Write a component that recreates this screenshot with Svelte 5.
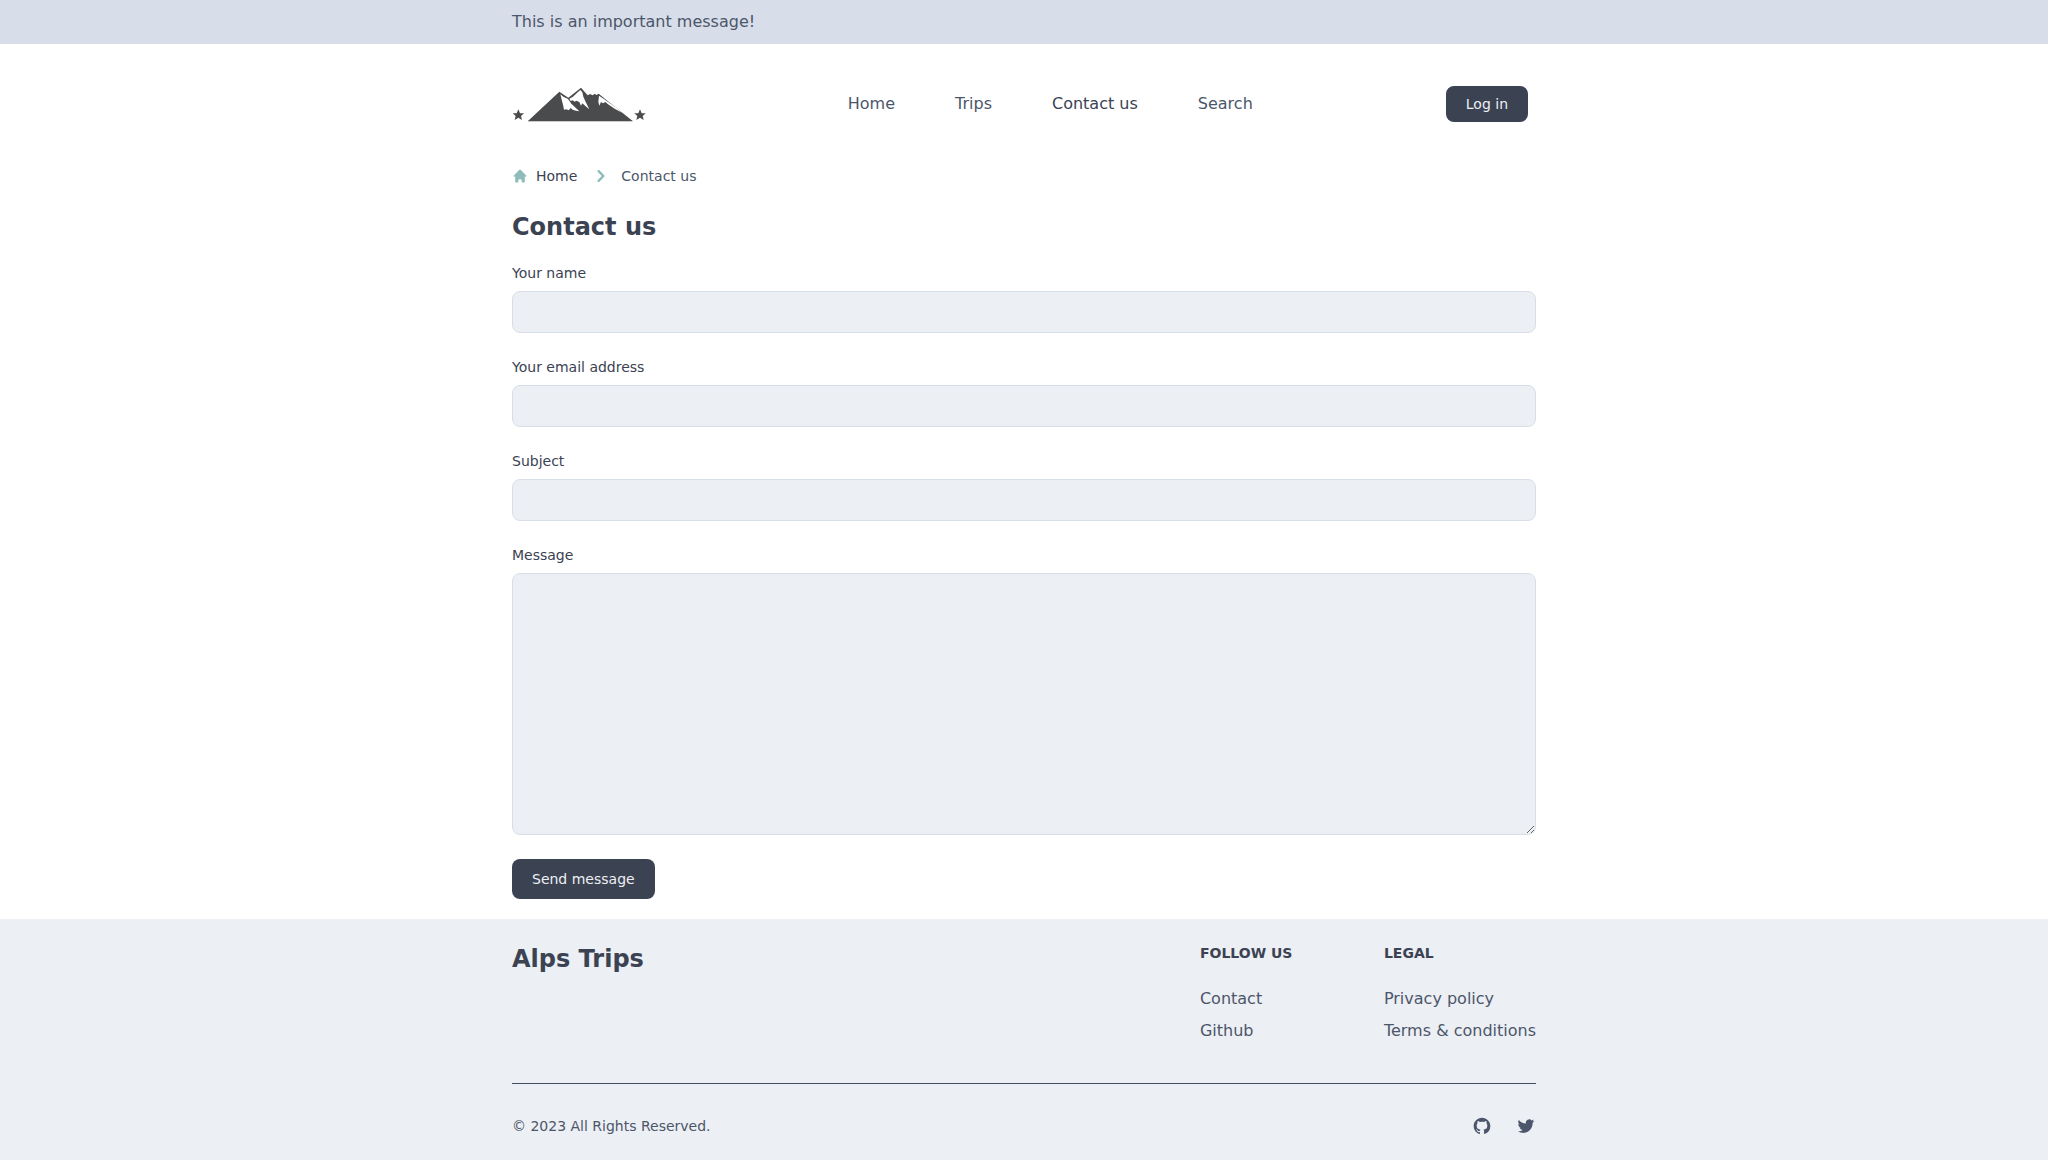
<script>
  const nav = [
    { label: 'Home' },
    { label: 'Trips' },
    { label: 'Contact us', active: true },
    { label: 'Search' }
  ];
  const fields = [
    { id: 'name', label: 'Your name', type: 'text' },
    { id: 'email', label: 'Your email address', type: 'email' },
    { id: 'subject', label: 'Subject', type: 'text' }
  ];
  const groups = [
    { title: 'Follow us', links: ['Contact', 'Github'] },
    { title: 'Legal', links: ['Privacy policy', 'Terms & conditions'] }
  ];
</script>

<div class="page">
  <div class="banner"><div class="container">This is an important message!</div></div>

  <header class="container header">
    <a class="logo" href="#home" aria-label="Alps Trips">
      <svg viewBox="36 0 408 180" width="136" height="60">
        <path fill="#bbb" d="M84 137h314v3H84z" />
        <path fill="#4a4b4d" d="M84 138 178 50 205 68 243 38 263 61 270 57 278 61 284 56 289 60 296 56 398 138z" />
        <path fill="#fff" d="M181 58 190 65 203 71 208 77 214 86 222 94 238 109 228 107 218 104 212 99 206 106 199 103 192 104 190 94 187 82z" />
        <path fill="#fff" d="M241 45 247 52 250 65 256 79 268 103 257 94 247 85 243 92 238 81 229 77 224 80 218 76 212 78 208 71 219 65 230 55z" />
        <path fill="#fff" d="M297 62 312 72 332 86 350 99 366 113 344 101 324 88 316 81 309 85 303 81 298 92 295 80z" />
        <path fill="#4a4b4d" d="M55 103l5 12h12l-9 8 3 12-11-7-11 7 3-12-9-8h12zM420 103l5 12h12l-9 8 3 12-11-7-11 7 3-12-9-8h12z" />
      </svg>
    </a>
    <nav class="nav">
      {#each nav as item}
        <a href="#nav" class:active={item.active}>{item.label}</a>
      {/each}
    </nav>
    <a class="login" href="#login">Log in</a>
  </header>

  <main class="container">
    <div class="crumbs">
      <a href="#home">
        <svg class="home" viewBox="0 0 20 20" width="16" height="16" fill="currentColor"><path d="M10.707 2.293a1 1 0 00-1.414 0l-7 7a1 1 0 001.414 1.414L4 10.414V17a1 1 0 001 1h2a1 1 0 001-1v-2a1 1 0 011-1h2a1 1 0 011 1v2a1 1 0 001 1h2a1 1 0 001-1v-6.586l.293.293a1 1 0 001.414-1.414l-7-7z" /></svg>
        Home
      </a>
      <svg class="chevron" viewBox="0 0 20 20" width="24" height="24" fill="currentColor"><path fill-rule="evenodd" clip-rule="evenodd" d="M7.293 14.707a1 1 0 010-1.414L10.586 10 7.293 6.707a1 1 0 011.414-1.414l4 4a1 1 0 010 1.414l-4 4a1 1 0 01-1.414 0z" /></svg>
      <span>Contact us</span>
    </div>

    <h1>Contact us</h1>

    <form>
      {#each fields as field}
        <div class="field">
          <label for={field.id}>{field.label}</label>
          <input id={field.id} type={field.type} />
        </div>
      {/each}
      <div class="field">
        <label for="message">Message</label>
        <textarea id="message"></textarea>
      </div>
      <button type="button">Send message</button>
    </form>
  </main>

  <footer>
    <div class="container">
      <div class="top">
        <div class="brand">Alps Trips</div>
        <div class="groups">
          {#each groups as group}
            <div>
              <h2>{group.title}</h2>
              <ul>
                {#each group.links as link}<li><a href="#link">{link}</a></li>{/each}
              </ul>
            </div>
          {/each}
        </div>
      </div>
      <hr />
      <div class="bottom">
        <span>© 2023 All Rights Reserved.</span>
        <div class="social">
          <a href="#github" aria-label="GitHub"><svg viewBox="0 0 24 24" width="20" height="20" fill="currentColor"><path fill-rule="evenodd" clip-rule="evenodd" d="M12 2C6.477 2 2 6.484 2 12.017c0 4.425 2.865 8.18 6.839 9.504.5.092.682-.217.682-.483 0-.237-.008-.868-.013-1.703-2.782.605-3.369-1.343-3.369-1.343-.454-1.158-1.11-1.466-1.11-1.466-.908-.62.069-.608.069-.608 1.003.07 1.531 1.032 1.531 1.032.892 1.53 2.341 1.088 2.91.832.092-.647.35-1.088.636-1.338-2.22-.253-4.555-1.113-4.555-4.951 0-1.093.39-1.988 1.029-2.688-.103-.253-.446-1.272.098-2.65 0 0 .84-.27 2.75 1.026A9.564 9.564 0 0112 6.844c.85.004 1.705.115 2.504.337 1.909-1.296 2.747-1.027 2.747-1.027.546 1.379.202 2.398.1 2.651.64.7 1.028 1.595 1.028 2.688 0 3.848-2.339 4.695-4.566 4.943.359.309.678.92.678 1.855 0 1.338-.012 2.419-.012 2.747 0 .268.18.58.688.482A10.019 10.019 0 0022 12.017C22 6.484 17.522 2 12 2z" /></svg></a>
          <a href="#twitter" aria-label="Twitter"><svg viewBox="0 0 24 24" width="20" height="20" fill="currentColor"><path d="M8.29 20.251c7.547 0 11.675-6.253 11.675-11.675 0-.178 0-.355-.012-.53A8.348 8.348 0 0022 5.92a8.19 8.19 0 01-2.357.646 4.118 4.118 0 001.804-2.27 8.224 8.224 0 01-2.605.996 4.107 4.107 0 00-6.993 3.743 11.65 11.65 0 01-8.457-4.287 4.106 4.106 0 001.27 5.477A4.072 4.072 0 012.8 9.713v.052a4.105 4.105 0 003.292 4.022 4.095 4.095 0 01-1.853.07 4.108 4.108 0 003.834 2.85A8.233 8.233 0 012 18.407a11.616 11.616 0 006.29 1.84" /></svg></a>
        </div>
      </div>
    </div>
  </footer>
</div>

<style>
  :global(body) { margin: 0; background: #fff; }
  .page, .page * { box-sizing: border-box; }
  .page {
    display: flex; flex-direction: column; min-height: 100vh;
    font: 16px/24px "DejaVu Sans", sans-serif; color: #4c566a;
  }
  a { color: inherit; text-decoration: none; }
  svg { display: block; }
  .container { width: 1024px; margin: 0 auto; }
  .banner { background: #d8dee9; padding: 10px 0; }
  .header {
    display: grid; grid-template-columns: 136px 1fr auto; align-items: center;
    height: 60px; margin-top: 31px; padding-right: 8px;
  }
  .logo { height: 60px; }
  .nav { display: flex; gap: 60px; padding-left: 199.8px; margin-top: -2px; }
  .nav .active { color: #3b4252; }
  .login, button {
    font: 14px/20px "DejaVu Sans", sans-serif; color: #eceff4; background: #3b4252;
    border: 0; border-radius: 8px; padding: 8px 20px;
  }
  .login { margin-top: -2px; }
  .crumbs {
    display: flex; align-items: center; height: 24px; margin-top: 29px;
    font-size: 14px; line-height: 20px;
  }
  .crumbs a { display: flex; align-items: center; gap: 8px; color: #3b4252; }
  .home, .chevron { color: #8fbcbb; }
  .chevron { margin: 0 8px 0 12px; }
  h1 { margin: 23px 0 20px; font-size: 24px; line-height: 32px; font-weight: 700; color: #3b4252; }
  .field { display: flex; flex-direction: column; gap: 8px; margin-bottom: 24px; }
  label { font-size: 14px; line-height: 20px; color: #3b4252; }
  input, textarea {
    display: block; width: 100%; height: 42px; margin: 0; padding: 10px;
    font: 14px/20px "DejaVu Sans", sans-serif; color: #3b4252;
    background: #eceff4; border: 1px solid #d8dee9; border-radius: 8px; outline: 0;
  }
  textarea { height: 262px; resize: vertical; }
  button { display: block; padding: 10px 20px; }
  footer { flex: 1; margin-top: 20px; padding-top: 24px; background: #eceff4; }
  .top { display: flex; justify-content: space-between; }
  .brand { font-size: 24px; line-height: 32px; font-weight: 700; color: #3b4252; }
  .groups { display: flex; gap: 91.5px; }
  h2 { margin: 0 0 24px; font-size: 14px; line-height: 20px; font-weight: 700; text-transform: uppercase; color: #3b4252; }
  ul { display: grid; gap: 8px; margin: 0; padding: 0; list-style: none; }
  hr { height: 1px; margin: 40px 0 32px; border: 0; background: #434c5e; }
  .bottom { display: flex; align-items: center; justify-content: space-between; font-size: 14px; line-height: 20px; }
  .social { display: flex; gap: 24px; }
</style>
